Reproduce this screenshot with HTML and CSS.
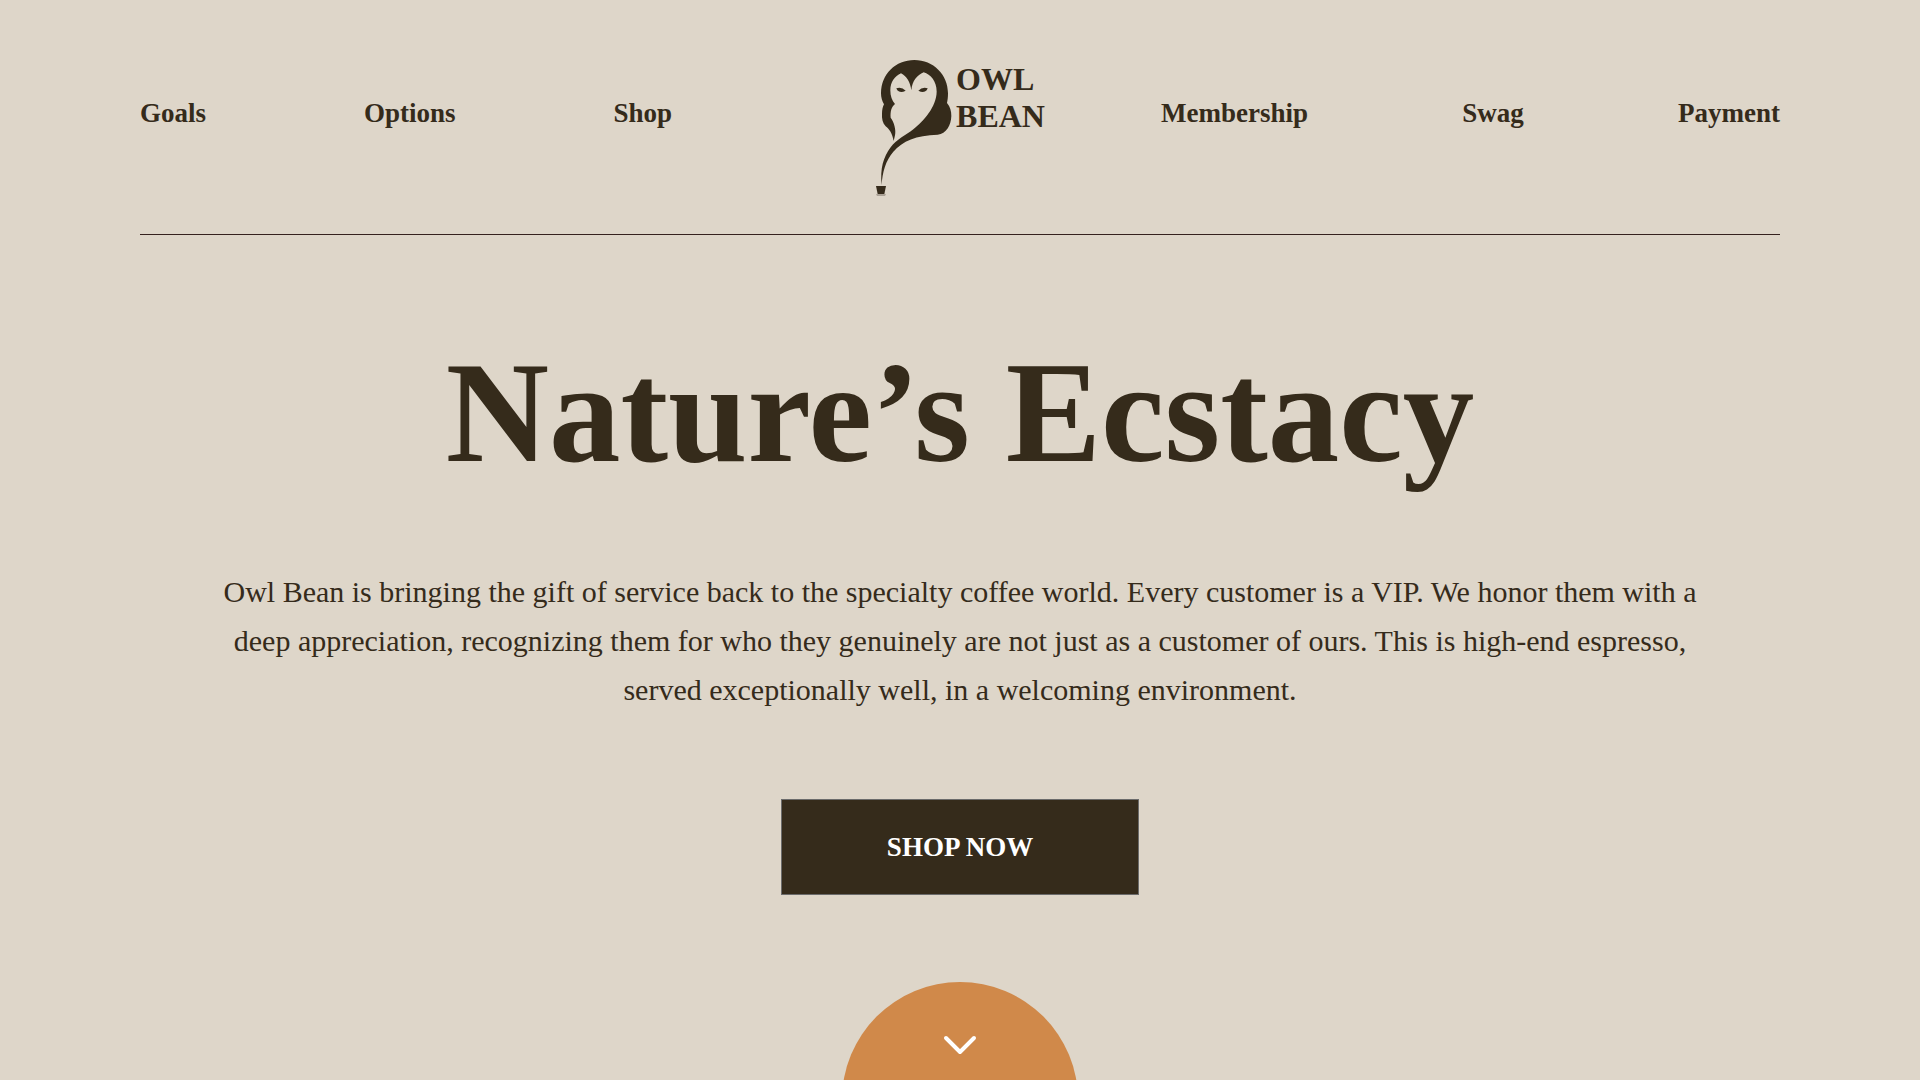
FILE: index.html
```
<!DOCTYPE html>
<html lang="en">
<head>
    <meta charset="UTF-8">
    <meta name="viewport" content="width=device-width, initial-scale=1.0">
    <title>Owl Bean</title>
    <link rel="stylesheet" href="styles.css">
</head>
<body>
    <div class="page">
        <header class="header">
            <nav class="nav">
                <ul class="nav-list nav-left">
                    <li><a href="#goals">Goals</a></li>
                    <li><a href="#options">Options</a></li>
                    <li><a href="#shop">Shop</a></li>
                </ul>
                <a class="logo" href="#">
                    <svg class="logo-owl" viewBox="42 27 231 411" aria-hidden="true">
                        <!-- head, feathers and the steam tail -->
                        <path d="M60 130 C60 72 104 30 160 30 C217 30 261 74 261 130 C261 142 260 150 258 159 C268 171 271 184 271 198 C270 226 256 251 230 254 C165 256 125 273 97 305 C74 332 64 366 62 405 C57 355 67 322 89 292 C106 268 134 257 157 238 C187 213 226 172 227 125 C227 94 209 73 188 67 C168 76 154 92 151 121 C148 95 137 80 120 70 C101 79 88 96 88 121 C88 139 93 152 102 162 C91 171 88 183 89 203 C99 216 106 240 102 256 L98 273 C94 250 84 236 74 229 C65 220 62 205 63 192 C63 180 65 171 69 163 C63 153 60 142 60 130 Z"/>
                        <path d="M106 115 Q122 110 134 122 Q118 130 109 121 Z"/>
                        <path d="M200 115 Q184 110 172 122 Q188 130 197 121 Z"/>
                        <!-- cup -->
                        <path d="M45 408 H75 L70 432 H50 Z"/>
                        <path class="saucer" d="M45 432 H75 L72 438 H48 Z"/>
                    </svg>
                    <span class="logo-text">OWL<br>BEAN</span>
                </a>
                <ul class="nav-list nav-right">
                    <li><a href="#membership">Membership</a></li>
                    <li><a href="#swag">Swag</a></li>
                    <li><a href="#payment">Payment</a></li>
                </ul>
            </nav>
        </header>
        <main class="hero">
            <h1>Nature’s Ecstacy</h1>
            <p>Owl Bean is bringing the gift of service back to the specialty coffee world. Every customer is a VIP. We honor them with a deep appreciation, recognizing them for who they genuinely are not just as a customer of ours. This is high-end espresso, served exceptionally well, in a welcoming environment.</p>
            <button class="btn" type="button">SHOP NOW</button>
            <a class="scroll-down" href="#shop" aria-label="Scroll down">
                <svg viewBox="0 0 34 20" aria-hidden="true">
                    <path d="M3 3 L17 17 L31 3"/>
                </svg>
            </a>
        </main>
    </div>
</body>
</html>
```

FILE: styles.css
```
*{
    margin: 0;
    padding: 0;
    box-sizing: border-box;
}
body{
    background: #ded6c9;
    color: #352b1b;
    font-family: "Liberation Serif", "Times New Roman", serif;
}
a{
    color: inherit;
    text-decoration: none;
}
.page{
    height: 100vh;
    padding: 0 140px;
    overflow: hidden;
}
.header{
    padding: 59px 0 38px;
    border-bottom: 1px solid #35221f;
}
.nav{
    display: grid;
    grid-template-columns: 1fr auto 1fr;
    align-items: start;
    column-gap: 116px;
}
.nav-list{
    display: flex;
    justify-content: space-between;
    margin-top: 38px;
    list-style: none;
    font-size: 27px;
    font-weight: bold;
    line-height: 32px;
}
.nav-left{
    padding-right: 87px;
}
.logo{
    display: flex;
    gap: 4px;
}
.logo-owl{
    width: 77px;
    height: 137px;
    fill: #352b1b;
}
.logo-owl .saucer{
    fill: #aaa195;
}
.logo-text{
    padding-top: 2px;
    font-size: 32px;
    font-weight: bold;
    line-height: 37px;
}
.hero{
    display: flex;
    flex-direction: column;
    align-items: center;
    text-align: center;
}
.hero h1{
    margin-top: 98px;
    font-size: 143px;
    line-height: 160px;
}
.hero p{
    max-width: 1500px;
    margin-top: 74px;
    font-size: 30px;
    line-height: 49px;
}
.btn{
    width: 358px;
    height: 96px;
    margin-top: 85px;
    border: 1px solid #6b6b6b;
    background: #352b1b;
    color: #fff;
    font-family: inherit;
    font-size: 27px;
    font-weight: bold;
    cursor: pointer;
}
.scroll-down{
    flex: none;
    display: flex;
    justify-content: center;
    width: 236px;
    height: 236px;
    margin-top: 87px;
    padding-top: 53px;
    border-radius: 50%;
    background: #d0894a;
}
.scroll-down svg{
    width: 34px;
    height: 20px;
    fill: none;
    stroke: #fff;
    stroke-width: 4;
    stroke-linecap: round;
    stroke-linejoin: round;
}
```
